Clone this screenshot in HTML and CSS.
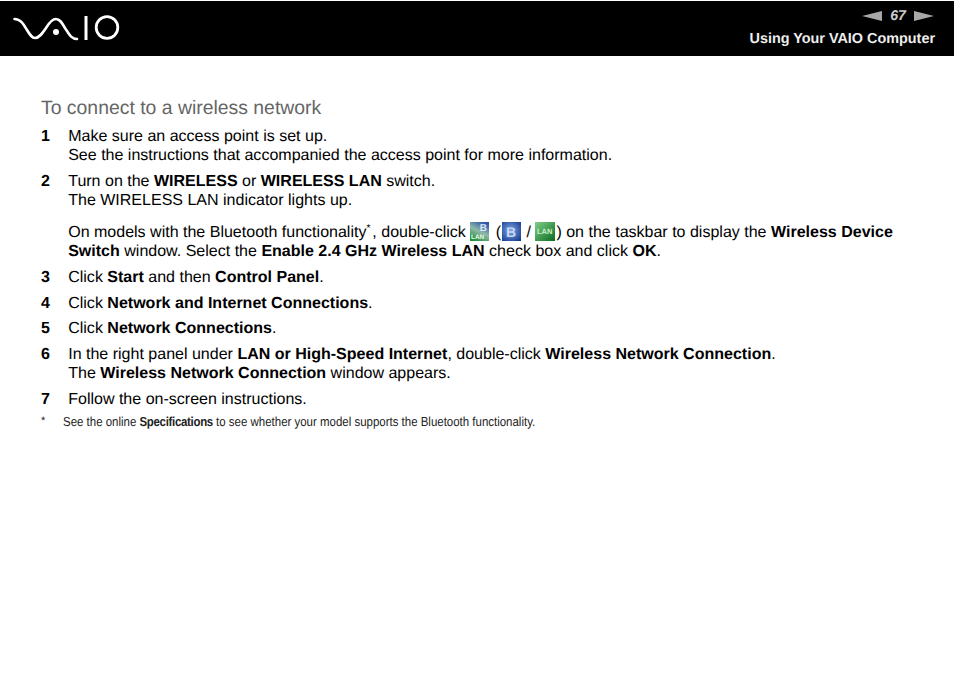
FILE: index.html
```html
<!DOCTYPE html>
<html lang="en">
<head>
<meta charset="utf-8">
<title>To connect to a wireless network</title>
<link rel="stylesheet" href="styles.css">
</head>
<body>
<header class="top">
  <svg class="logo" width="108" height="28" viewBox="0 0 108 28" aria-label="VAIO">
    <path class="logo-line" d="M1.500 4 C8 4 11 10 14 15 C17 20 19 23 22 23 C26 23 29 19 33 13 C36 8 39 4 43 4 C47 4 49 8 52 13 C56 19 58 24 64 24" />
    <circle class="logo-dot" cx="43" cy="17" r="3"/>
    <rect class="logo-dot" x="71.500" y="1" width="3" height="24"/>
    <circle class="logo-o" cx="94" cy="12.500" r="10.800"/>
  </svg>
  <div class="nav">
    <div class="pager">
      <svg width="20" height="10" viewBox="0 0 20 10"><polygon class="arrow" points="0,5 20,0 20,10"/></svg>
      <span class="page">67</span>
      <svg width="20" height="10" viewBox="0 0 20 10"><polygon class="arrow" points="20,5 0,0 0,10"/></svg>
    </div>
    <div class="section">Using Your VAIO Computer</div>
  </div>
</header>
<main class="content">
  <h1 class="title">To connect to a wireless network</h1>
  <ol class="steps">
    <li class="step"><span class="num">1</span><div class="body"><p>Make sure an access point is set up.<br>See the instructions that accompanied the access point for more information.</p></div></li>
    <li class="step"><span class="num">2</span><div class="body"><p>Turn on the <b>WIRELESS</b> or <b>WIRELESS LAN</b> switch.<br>The WIRELESS LAN indicator lights up.</p>
      <p class="para">On models with the Bluetooth functionality<sup class="star">*</sup>, double-click <svg class="tray tray-first" width="19" height="19" viewBox="0 0 19 19"><defs><linearGradient id="g1" x1=".25" y1="1" x2=".75" y2="0"><stop offset="0" stop-color="#1f8f34"/><stop offset=".5" stop-color="#8fb8a8"/><stop offset="1" stop-color="#2a55a8"/></linearGradient></defs><rect width="19" height="19" fill="url(#g1)"/><text class="tray-b" x="9.700" y="8.500">B</text><text class="tray-lan-small" x="1" y="16.500">LAN</text></svg> (<svg class="tray tray-second" width="19" height="19" viewBox="0 0 19 19"><defs><radialGradient id="g2" cx=".45" cy=".45" r=".7"><stop offset="0" stop-color="#7fa8e2"/><stop offset="1" stop-color="#173a92"/></radialGradient></defs><rect width="19" height="19" fill="url(#g2)"/><text class="tray-big" x="4" y="15">B</text></svg> / <svg class="tray tray-third" width="20" height="19" viewBox="0 0 20 19"><defs><linearGradient id="g3" x1="0" y1="0" x2="1" y2="1"><stop offset="0" stop-color="#7fd088"/><stop offset="1" stop-color="#0a6a20"/></linearGradient></defs><rect width="20" height="19" fill="url(#g3)"/><text class="tray-lan" x="2" y="12">LAN</text></svg>) on the taskbar to display the <b>Wireless Device Switch</b> window. Select the <b>Enable 2.4 GHz Wireless LAN</b> check box and click <b>OK</b>.</p></div></li>
    <li class="step"><span class="num">3</span><div class="body"><p>Click <b>Start</b> and then <b>Control Panel</b>.</p></div></li>
    <li class="step step-tight"><span class="num">4</span><div class="body"><p>Click <b>Network and Internet Connections</b>.</p></div></li>
    <li class="step"><span class="num">5</span><div class="body"><p>Click <b>Network Connections</b>.</p></div></li>
    <li class="step"><span class="num">6</span><div class="body"><p>In the right panel under <b>LAN or High-Speed Internet</b>, double-click <b>Wireless Network Connection</b>.<br>The <b>Wireless Network Connection</b> window appears.</p></div></li>
    <li class="step"><span class="num">7</span><div class="body"><p>Follow the on-screen instructions.</p></div></li>
  </ol>
  <div class="note"><span class="note-mark">*</span><span class="note-text">See the online <b class="note-strong">Specifications</b> to see whether your model supports the Bluetooth functionality.</span></div>
</main>
</body>
</html>
```
FILE: styles.css
```css
html, body { margin: 0; padding: 0; background: #fff; }
body { width: 954px; height: 674px; overflow: hidden; font-family: "Liberation Sans", Arial, sans-serif; color: #000; text-rendering: geometricPrecision; }
p { margin: 0; }
.top { margin-top: 1px; height: 55px; background: #000; display: flex; justify-content: space-between; color: #fff; }
.logo { margin: 14px 0 0 13px; }
.logo-line { fill: none; stroke: #fff; stroke-width: 2.600; stroke-linecap: round; }
.logo-dot { fill: #fff; }
.logo-o { fill: none; stroke: #fff; stroke-width: 2.800; }
.nav { display: flex; flex-direction: column; align-items: flex-end; padding: 5px 19px 0 0; }
.pager { display: flex; align-items: center; gap: 8px; height: 20px; margin-right: 1px; }
.arrow { fill: #a8a8a8; }
.page { font-size: 14.200px; font-style: italic; font-weight: bold; color: #ccc; }
.section { margin-top: 5px; font-size: 14.400px; font-weight: bold; color: #eee; }
.content { padding: 41px 0 0 41px; }
.title { margin: 0; font-size: 19.400px; font-weight: normal; color: #666; line-height: 23px; }
.steps { list-style: none; margin: 7px 0 0; padding: 0; width: 870px; }
.step { display: flex; font-size: 16.020px; line-height: 19px; margin-bottom: 7px; }
.step-tight { margin-bottom: 6px; }
.num { width: 27.200px; flex: none; font-weight: bold; }
.body { flex: 1; }
.para { margin-top: 13px; }
.star { font-size: 10px; line-height: 0; margin-right: 2px; }
.tray { vertical-align: 0; margin: -4px 1px; }
.tray-first { margin: -4px 2px -4px 0; }
.tray-second { margin-left: 1px; margin-right: 1px; }
.tray-third { margin-left: 0; }
.tray-b { font: bold 10px "Liberation Sans", sans-serif; fill: #dfe8fb; }
.tray-lan-small { font: bold 6.400px "Liberation Sans", sans-serif; fill: #e4f7e4; }
.tray-lan { font: bold 7.500px "Liberation Sans", sans-serif; fill: #c8f0c8; }
.tray-big { font: bold 14px "Liberation Sans", sans-serif; fill: #c8d8f8; }
.note { display: flex; font-size: 13px; color: #222; line-height: 15px; margin-top: -2px; }
.note-mark { width: 22px; flex: none; font-size: 11px; }
.note-text { display: block; white-space: nowrap; transform: scaleX(.882); transform-origin: left center; }
.note-strong { letter-spacing: -.35px; }
```
